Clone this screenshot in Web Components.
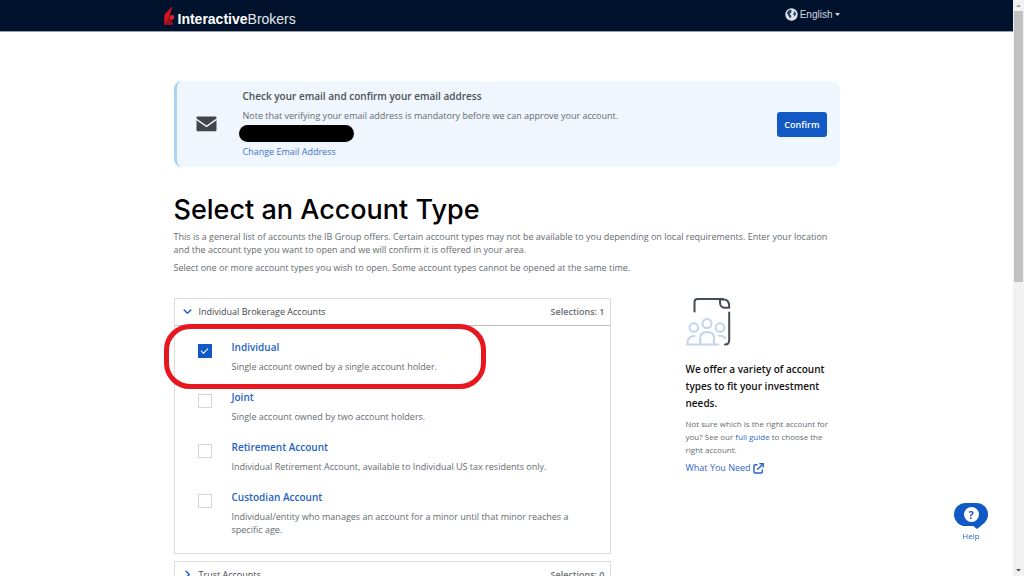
<!DOCTYPE html>
<html lang="en">
<head>
<meta charset="utf-8">
<meta name="viewport" content="width=device-width, initial-scale=1">
<title>Select an Account Type</title>
<style>
  html, body { margin: 0; height: 100%; overflow: hidden; }
  body {
    --blue: #1159c4;
    --text: #666b70;
    background: #fff;
    color: var(--text);
    font: 9px/13px "Open Sans", "Liberation Sans", sans-serif;
  }
</style>
</head>
<body>
<account-app></account-app>

<template id="t-app">
  <style>
    :host { display: block; padding-right: 11px; height: 100vh; overflow: hidden; box-sizing: border-box; }
    main { max-width: 666px; margin: 0 auto; padding-top: 49px; }
    h1 { margin: 24px 0 1px; font-family: Inter, "Open Sans", sans-serif; font-size: 27px; line-height: 38px; font-weight: 500; color: #000; }
    p { margin: 0 0 5px; }
    .columns { display: grid; grid-template-columns: minmax(0, 437fr) minmax(0, 154fr); column-gap: 75px; margin-top: 24px; align-items: start; }
    .list { display: grid; gap: 7px; }
  </style>
  <site-header></site-header>
  <main>
    <email-notice></email-notice>
    <h1>Select an Account Type</h1>
    <p>This is a general list of accounts the IB Group offers. Certain account types may not be available to you depending on local requirements. Enter your location and the account type you want to open and we will confirm it is offered in your area.</p>
    <p>Select one or more account types you wish to open. Some account types cannot be opened at the same time.</p>
    <div class="columns">
      <div class="list">
        <account-group heading="Individual Brokerage Accounts" count="1" open>
          <account-option name="Individual" checked highlighted>Single account owned by a single account holder.</account-option>
          <account-option name="Joint">Single account owned by two account holders.</account-option>
          <account-option name="Retirement Account">Individual Retirement Account, available to Individual US tax residents only.</account-option>
          <account-option name="Custodian Account">Individual/entity who manages an account for a minor until that minor reaches a specific age.</account-option>
        </account-group>
        <account-group heading="Trust Accounts" count="0"></account-group>
      </div>
      <account-guide></account-guide>
    </div>
  </main>
  <help-bubble></help-bubble>
  <page-scrollbar></page-scrollbar>
</template>

<template id="t-header">
  <style>
    :host { display: block; background: #00122c; border-bottom: 1px solid #98a0ab; font-family: "Liberation Sans", Arial, sans-serif; }
    .bar { display: flex; justify-content: space-between; align-items: flex-start; max-width: 676px; height: 31px; margin: 0 auto; padding-right: 10px; }
    .logo { display: flex; gap: 3px; padding-top: 5px; color: #e4e8ed; font-size: 14px; line-height: 16px; text-decoration: none; }
    .logo span { padding-top: 6px; }
    b { color: #fff; }
    button { display: flex; align-items: center; gap: 2px; margin: 0; padding: 7px 0 0; border: 0; background: none; color: #d5dae0; font: 10px/14px "Liberation Sans", Arial, sans-serif; }
    button span { padding-top: 1px; }
    svg { display: block; flex: none; }
  </style>
  <header class="bar">
    <a class="logo" href="#" aria-label="InteractiveBrokers">
      <svg width="11" height="20" viewBox="0 0 11 20"><path d="M8.5 1 L5.2 12 L9.3 19.5 H.3 V11.5 C.3 10 .8 9.2 2 8Z" fill="#d9141f"/><path d="M5.2 12 L.3 19.5 H9.3Z" fill="#9e101b"/><circle cx="8" cy="12.4" r="2.3" fill="#e3202b"/></svg>
      <span><b>Interactive</b>Brokers</span>
    </a>
    <button type="button">
      <svg width="13" height="13" viewBox="0 0 13 13"><circle cx="6.5" cy="6.5" r="6.2" fill="#dfe3e8"/><path d="M3.4 2.4 L5.4 1.6 L6.8 2.4 L6.1 3.5 L6.6 4.4 L5.3 5.2 L4.6 6.2 L5.8 7.1 L6.4 8.4 L5.5 9.8 L5 11 L4.4 9 L3.3 7.6 L2.2 6 L2.2 4.2Z M9.2 3 L10.4 4.2 L11 6 L10.3 7.2 L9.7 8.8 L9 7.2 L8.2 6.2 L8.6 4.9 L9.5 4.4 L8.7 3.7Z" fill="#24405f"/></svg>
      <span>English</span>
      <svg width="5" height="3" viewBox="0 0 5 3"><path d="M0 0H5L2.5 3Z" fill="#d5dae0"/></svg>
    </button>
  </header>
</template>

<template id="t-notice">
  <style>
    :host { display: flex; align-items: center; padding: 8px 13px 8px 19px; background: #eff6fd; border-left: 3px solid #a9d3f2; border-radius: 8px; }
    svg { display: block; flex: none; margin-right: 26px; }
    .body { flex: 1; }
    h2 { margin: 0 0 6px; font-size: 10px; line-height: 14px; font-weight: 600; color: #4c5156; }
    p { margin: 0; line-height: 14px; }
    .address { width: 115px; height: 17px; margin: 2px 0 3px -4px; border-radius: 9px; background: #000; }
    a { display: table; line-height: 14px; color: #3f72c9; text-decoration: none; }
    button { height: 25px; margin: 0; padding: 0 7px; border: 0; border-radius: 3px; background: var(--blue); color: #fff; font: 600 9px/13px "Open Sans", sans-serif; }
  </style>
  <svg width="21" height="16" viewBox="0 0 21 16"><path d="M2 0.5H19C20 .5 20.5 1 20.5 1.8V2.4L10.5 9.4L.5 2.4V1.8C.5 1 1 .5 2 .5Z M.5 4.3L10.5 11.3L20.5 4.3V13.8C20.5 14.8 20 15.3 19 15.3H2C1 15.3 .5 14.8 .5 13.8Z" fill="#42464a"/></svg>
  <div class="body">
    <h2>Check your email and confirm your email address</h2>
    <p>Note that verifying your email address is mandatory before we can approve your account.</p>
    <div class="address"></div>
    <a href="#">Change Email Address</a>
  </div>
  <button type="button">Confirm</button>
</template>

<template id="t-group">
  <style>
    :host { display: block; border: 1px solid #dcdcdc; }
    button { display: flex; align-items: center; width: 100%; height: 26px; margin: 0; padding: 0 5px 2px 8px; border: 0; background: none; color: #43484d; font: 9px/13px "Open Sans", sans-serif; text-align: left; }
    svg { display: block; flex: none; width: 9px; margin-right: 7px; transform: rotate(-90deg); }
    :host([open]) svg { transform: none; }
    .title { flex: 1; }
    .count { font-weight: 600; color: #6a6f74; }
    .options { display: none; gap: 17px; padding: 14px 31px 17px 23px; border-top: 1px solid #bdbdbd; }
    :host([open]) .options { display: grid; }
  </style>
  <button type="button">
    <svg height="9" viewBox="0 0 9 9"><path d="M.8 2.6L4.5 6.2L8.2 2.6" fill="none" stroke="#2765c6" stroke-width="1.5"/></svg>
    <span class="title"></span>
    <span class="count"></span>
  </button>
  <div class="options"><slot></slot></div>
</template>

<template id="t-option">
  <style>
    :host { display: flex; align-items: flex-start; gap: 20px; position: relative; }
    input { appearance: none; flex: none; display: grid; place-items: center; width: 14px; height: 14px; margin: 4px 0 0; border: 1px solid #d6d6d6; background: #fff; }
    input:checked { border-color: var(--blue); background: var(--blue); }
    input:checked::after { content: ""; width: 6px; height: 3px; margin-bottom: 2px; border: solid #fff; border-width: 0 0 1px 1px; transform: rotate(-45deg); }
    label { display: block; font-size: 10px; line-height: 14px; font-weight: 600; color: #2562c4; margin-bottom: 6px; }
    :host([highlighted])::after { content: ""; position: absolute; left: -34px; top: -16px; width: 312px; height: 55px; border: 5px solid #e8161e; border-radius: 26px; pointer-events: none; }
  </style>
  <input type="checkbox" id="box">
  <div>
    <label for="box"></label>
    <slot></slot>
  </div>
</template>

<template id="t-guide">
  <style>
    :host { display: block; font-size: 8px; }
    svg { display: block; }
    h2 { margin: 15px 0 5px; font-size: 10px; line-height: 17px; font-weight: 600; color: #111; }
    p { margin: 0 0 5px; }
    a { color: #3068c6; text-decoration: none; }
    .need { display: flex; align-items: center; gap: 2px; font-size: 9px; line-height: 14px; }
  </style>
  <svg width="45" height="48" viewBox="0 0 45 48" fill="none" stroke-linecap="round" stroke-linejoin="round">
    <g stroke="#454b57" stroke-width="2">
      <path d="M8.5 13.5V4C8.5 2 9.5 1 11.5 1H37"/>
      <path d="M34 1.4H37.5C41 1.4 43.2 4 43.2 8V9.8H39C36 9.8 34 7.5 34 4.5Z"/>
      <path d="M43.2 14.5V42C43.2 45 41.5 46.6 39 46.6"/>
    </g>
    <g stroke="#c3d5e9" stroke-width="2">
      <circle cx="21" cy="25.5" r="4.5"/>
      <circle cx="7.8" cy="29.5" r="4.3"/>
      <circle cx="34" cy="29.5" r="4.3"/>
      <path d="M14.3 46V40C14.3 36 17 34 21 34S28 36 28 40V46"/>
      <path d="M32.5 46.5H1.2C1.2 41 3.5 38 8.5 38"/>
      <path d="M33 37.8C36 37.6 38 38.4 39.3 40.2"/>
    </g>
  </svg>
  <h2>We offer a variety of account types to fit your investment needs.</h2>
  <p>Not sure which is the right account for you? See our <a href="#">full guide</a> to choose the right account.</p>
  <a class="need" href="#">What You Need
    <svg width="11" height="11" viewBox="0 0 11 11" fill="none" stroke="#2562c4" stroke-width="1.4"><path d="M4.5 1.7H2.2C1.3 1.7 1 2 1 2.8V8.8C1 9.7 1.3 10 2.2 10H8.2C9 10 9.3 9.7 9.3 8.8V6.5M4.2 6.8L9.6 1.4"/><path d="M6.4.8H10.2V4.6"/></svg>
  </a>
</template>

<template id="t-help">
  <style>
    :host { position: fixed; right: 36px; bottom: 34px; }
    a { display: grid; justify-items: center; color: #2c67c6; font-size: 8px; line-height: 12px; text-decoration: none; }
    .bubble { position: relative; display: grid; place-items: center; width: 34px; height: 23px; margin-bottom: 4px; border-radius: 12px; background: var(--blue); }
    .bubble::after { content: ""; position: absolute; left: 18px; top: 22px; border: solid transparent; border-width: 4px 5px 0; border-top-color: var(--blue); }
    .mark { width: 15px; height: 15px; border-radius: 50%; background: #fff; color: #1b5ab5; font-size: 11px; line-height: 15px; font-weight: 700; text-align: center; }
  </style>
  <a href="#"><span class="bubble"><span class="mark">?</span></span>Help</a>
</template>

<template id="t-scroll">
  <style>
    :host { position: fixed; top: 0; right: 0; bottom: 0; width: 11px; display: flex; flex-direction: column; align-items: center; background: #f1f1f1; }
    svg { display: block; flex: none; }
    .track { flex: 1; width: 9px; }
    .thumb { height: 49%; background: #c1c1c1; }
  </style>
  <svg width="11" height="11" viewBox="0 0 11 11"><path d="M3 7H8L5.5 4.5Z" fill="#9b9b9b"/></svg>
  <div class="track"><div class="thumb"></div></div>
  <svg width="11" height="11" viewBox="0 0 11 11"><path d="M3 4H8L5.5 6.5Z" fill="#505050"/></svg>
</template>

<script>
  class TemplateElement extends HTMLElement {
    constructor() {
      super();
      const root = this.attachShadow({ mode: "open" });
      root.append(document.getElementById(this.constructor.template).content.cloneNode(true));
    }
  }
  const define = (name, template, base = TemplateElement) => {
    customElements.define(name, class extends base { static template = template; });
  };

  class AccountGroup extends TemplateElement {
    connectedCallback() {
      const button = this.shadowRoot.querySelector("button");
      const count = this.shadowRoot.querySelector(".count");
      this.shadowRoot.querySelector(".title").textContent = this.getAttribute("heading");
      count.textContent = "Selections: " + this.getAttribute("count");
      button.setAttribute("aria-expanded", this.hasAttribute("open"));
      button.onclick = () => button.setAttribute("aria-expanded", this.toggleAttribute("open"));
      this.addEventListener("option-change", () => {
        const total = [...this.querySelectorAll("account-option")].filter(o => o.selected).length;
        count.textContent = "Selections: " + total;
      });
    }
  }

  class AccountOption extends TemplateElement {
    get selected() { return this.shadowRoot.querySelector("input").checked; }
    connectedCallback() {
      const input = this.shadowRoot.querySelector("input");
      this.shadowRoot.querySelector("label").textContent = this.getAttribute("name");
      input.checked = this.hasAttribute("checked");
      input.onchange = () => this.dispatchEvent(new CustomEvent("option-change", { bubbles: true }));
    }
  }

  define("site-header", "t-header");
  define("email-notice", "t-notice");
  define("account-option", "t-option", AccountOption);
  define("account-group", "t-group", AccountGroup);
  define("account-guide", "t-guide");
  define("help-bubble", "t-help");
  define("page-scrollbar", "t-scroll");
  define("account-app", "t-app");
</script>
</body>
</html>
